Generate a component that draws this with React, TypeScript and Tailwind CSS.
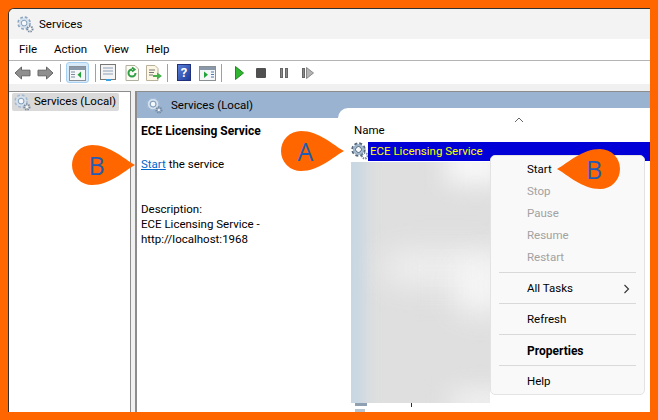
import React from "react";

const font = { fontFamily: 'Roboto, "Noto Sans", sans-serif' };

function Gear({ size = 18, dim = false, dark = false }: { size?: number; dim?: boolean; dark?: boolean }) {
  const a = dim ? "#a3bad3" : dark ? "#56677a" : "#8ba6c2";
  return (
    <svg width={size} height={size} viewBox="0 0 18 18" className="shrink-0">
      <circle cx="7.5" cy="7.5" r="5.6" fill="none" stroke={a} strokeWidth="3.2" strokeDasharray="2.6 1.8" />
      <circle cx="7.5" cy="7.5" r="4.6" fill="none" stroke={dark ? "#9fb6cc" : "#d4e1ee"} strokeWidth="2" />
      <circle cx="7.5" cy="7.5" r="3" fill="#f6f9fc" stroke={dark ? "#3d5873" : "#7c98b5"} strokeWidth="1" />
      <circle cx="13.7" cy="13.7" r="2.8" fill="none" stroke="#76889a" strokeWidth="2" strokeDasharray="1.4 1" />
      <circle cx="13.7" cy="13.7" r="1.1" fill="#ffffff" />
    </svg>
  );
}

function Arrow({ flip }: { flip?: boolean }) {
  return (
    <svg width="17" height="14" viewBox="0 0 17 14" className={flip ? "-scale-x-100" : ""}>
      <path d="M1 7 L7.5 1 V4.2 H16 V9.8 H7.5 V13 Z" fill="#8f8f8f" stroke="#666666" strokeWidth="1" strokeLinejoin="round" />
    </svg>
  );
}

function Sep() {
  return <div className="w-px h-[18px] bg-[#a0a0a0]" />;
}

function PaneIcon({ variant }: { variant: "left" | "right" }) {
  return (
    <svg width="17" height="16" viewBox="0 0 17 16">
      <rect x="0.5" y="1.5" width="16" height="14" fill="#f4f6f8" stroke="#8a8f96" />
      <rect x="1" y="2" width="15" height="3" fill="#8a99aa" />
      {variant === "left" && (
        <>
          <path d="M2 7 h4 M2 9.5 h4 M2 12 h4" stroke="#7b8ca0" />
          <path d="M12 6.5 V13 L8.5 9.8 Z" fill="#22a33a" />
        </>
      )}
      {variant === "right" && (
        <>
          <path d="M12 7 h3 M12 9.5 h3 M12 12 h3" stroke="#4a78b0" />
          <path d="M5 6.5 V13 L9 9.8 Z" fill="#22a33a" />
        </>
      )}
    </svg>
  );
}

function Callout({ letter, dir, className }: { letter: string; dir: "left" | "right"; className: string }) {
  return (
    <div className={`absolute h-10 flex items-center justify-center ${className}`}>
      <svg width="64" height="40" viewBox="0 0 64 40" className={`absolute inset-0 ${dir === "left" ? "-scale-x-100" : ""}`}>
        <path d="M63 20 C52 14 38 0 20 0 A20 20 0 0 0 20 40 C38 40 52 26 63 20 Z" fill="#ff6600" />
      </svg>
      <span className={`relative text-[25px] leading-none text-[#1f5cb4] ${dir === "left" ? "ml-[12px]" : "mr-[15px]"}`} style={{ fontFamily: '"Open Sans", sans-serif' }}>
        {letter}
      </span>
    </div>
  );
}

function MenuItem({ label, disabled, bold, arrow }: { label: string; disabled?: boolean; bold?: boolean; arrow?: boolean }) {
  return (
    <div className={`h-[22px] flex items-center justify-between pl-9 pr-[14px] pt-[1px] ${disabled ? "text-[#a2a2a2]" : "text-black"} ${bold ? "font-bold text-[12px]" : ""}`}>
      <span>{label}</span>
      {arrow && (
        <svg width="7" height="10" viewBox="0 0 7 10">
          <path d="M1.5 1 L5.5 5 L1.5 9" fill="none" stroke="#333" strokeWidth="1.1" />
        </svg>
      )}
    </div>
  );
}

function MenuSep() {
  return (
    <div className="h-[9px] flex items-center px-2">
      <div className="h-px w-full bg-[#d9d9d9]" />
    </div>
  );
}

export default function App() {
  return (
    <div className="relative w-[658px] h-[420px] bg-[#ff6600] p-2 overflow-hidden text-[11.5px] text-black" style={font}>
      <div className="relative w-[642px] h-[404px] bg-[#f0f0f0] rounded-tl-[6px] border-l border-t border-[#303030] flex flex-col overflow-hidden">
        {/* title */}
        <div className="h-[30px] bg-[#f3f3f3] flex items-center pl-[8px] gap-[5px] shrink-0">
          <Gear size={17} />
          <span className="pt-[1px]">Services</span>
        </div>
        {/* menu */}
        <div className="h-[22px] bg-white flex items-center pl-[10px] pt-[1px] gap-[17px] shrink-0 border-b border-[#b4b4b4]">
          <span>File</span>
          <span>Action</span>
          <span>View</span>
          <span>Help</span>
        </div>
        {/* toolbar */}
        <div className="h-[23px] bg-white flex items-center pl-[5px] shrink-0">
          <Arrow />
          <div className="ml-[6px]"><Arrow flip /></div>
          <div className="ml-[6px]"><Sep /></div>
          <div className="ml-[5px] w-[23px] h-[21px] bg-[#d6eafa] border border-[#a8d0f0] rounded-[3px] flex items-center justify-center">
            <PaneIcon variant="left" />
          </div>
          <div className="ml-[6px]"><Sep /></div>
          <div className="ml-[4px]">
            <svg width="16" height="17" viewBox="0 0 16 17">
              <rect x="0.5" y="0.5" width="15" height="15" fill="#f4f4f4" stroke="#777" />
              <path d="M3 4 h10 M3 7 h10 M3 10 h10" stroke="#8aa0b8" />
              <rect x="6" y="15" width="5" height="2" fill="#3aa0e0" />
            </svg>
          </div>
          <div className="ml-[9px]">
            <svg width="14" height="16" viewBox="0 0 14 16">
              <path d="M1 .5 H10 L13.5 4 V15.5 H1 Z" fill="#fbfbf2" stroke="#b0b0a0" />
              <path d="M10.5 8 A3.5 3.5 0 1 1 7 4.5 M7 2.5 L9.5 4.5 L7 6.5" fill="none" stroke="#2f9e44" strokeWidth="2" />
            </svg>
          </div>
          <div className="ml-[7px]">
            <svg width="16" height="16" viewBox="0 0 16 16">
              <path d="M.5 .5 H9 L12 3.5 V15.5 H.5 Z" fill="#fbf7e4" stroke="#b8b09a" />
              <path d="M3 5 h6 M3 7.5 h5 M3 10 h4" stroke="#777" />
              <path d="M7 10 H11 V7.5 L16 11 L11 14.5 V12 H7 Z" fill="#46b04a" />
            </svg>
          </div>
          <div className="ml-[5px]"><Sep /></div>
          <div className="ml-[9px] w-[14px] h-[17px] bg-gradient-to-br from-[#5b7fd8] to-[#1f3d9c] border border-[#20307a] flex items-center justify-center text-white font-bold text-[13px] leading-none">?</div>
          <div className="ml-[8px]"><PaneIcon variant="right" /></div>
          <div className="ml-[5px]"><Sep /></div>
          <div className="ml-[13px]">
            <svg width="9" height="14" viewBox="0 0 9 14"><path d="M0.5 0.5 V13.5 L8.5 7 Z" fill="#2fb52f" stroke="#208a20" /></svg>
          </div>
          <div className="ml-[12px] w-[10px] h-[10px] bg-[#505050] rounded-[1px]" />
          <div className="ml-[14px] flex gap-[2px]">
            <div className="w-[3px] h-[10px] bg-[#8a8a8a] border border-[#666]" />
            <div className="w-[3px] h-[10px] bg-[#8a8a8a] border border-[#666]" />
          </div>
          <div className="ml-[14px] flex items-center gap-[1px]">
            <div className="w-[3px] h-[10px] bg-[#8a8a8a] border border-[#666]" />
            <svg width="8" height="12" viewBox="0 0 8 12"><path d="M.5 .5 V11.5 L7.5 6 Z" fill="#b5b5b5" stroke="#8a8a8a" /></svg>
          </div>
        </div>
        {/* panes */}
        <div className="flex-1 flex pt-[7px] gap-[4px] min-h-0">
          <div className="w-[122px] bg-white border-t border-r border-[#8c8c8c] shrink-0 pl-[3px] pt-[1px]">
            <div className="h-[18px] w-[107px] bg-[#d9d9d9] rounded-[2px] flex items-center gap-[3px] pl-[2px] whitespace-nowrap">
              <Gear size={17} dim />
              <span>Services (Local)</span>
            </div>
          </div>
          <div className="flex-1 bg-white border-t border-l-2 border-[#8c8c8c] flex flex-col min-w-0">
            <div className="h-[26px] bg-[#9ab3d1] flex items-center pl-[9px] pt-[1px] gap-[8px] shrink-0">
              <Gear size={17} dim />
              <span>Services (Local)</span>
            </div>
            <div className="pl-[4px] pt-[6px] leading-[15px] w-[190px]">
              <div className="font-bold text-[12px]">ECE Licensing Service</div>
              <div className="mt-[18px]"><span className="text-[#0066cc] underline">Start</span> the service</div>
              <div className="mt-[30px]">Description:</div>
              <div>ECE Licensing Service -</div>
              <div>http://localhost:1968</div>
            </div>
          </div>
        </div>

        {/* overlay panel with list */}
        <div className="absolute left-[329px] top-[99px] w-[312px] h-[304px] bg-white rounded-tl-[10px] overflow-hidden">
          <div className="absolute left-[16px] top-[14px]">Name</div>
          <svg width="10" height="6" viewBox="0 0 10 6" className="absolute left-[176px] top-[9px]">
            <path d="M1 5 L5 1 L9 5" fill="none" stroke="#666" />
          </svg>
          <div className="absolute left-[13px] top-[34px]"><Gear size={18} dark /></div>
          <div className="absolute left-[30px] top-[34px] w-[282px] h-[19px] bg-[#0000d7] text-[#ffff00] flex items-center pl-[2px] pt-[1px]">ECE Licensing Service</div>
          <div className="absolute left-[13px] top-[54px] w-[139px] h-[241px] bg-[#dfdfdf] overflow-hidden">
            <div className="absolute -left-[10px] -top-[20px] w-[22px] h-[290px] bg-[#c4d6e3] blur-sm" />
            <div className="absolute left-[95px] -top-[14px] w-[60px] h-[36px] bg-[#f8f8f8] blur-md" />
            <div className="absolute left-[35px] top-[92px] w-[120px] h-[28px] bg-[#f3f3f3] blur-lg" />
            <div className="absolute left-[105px] top-[100px] w-[50px] h-[50px] bg-[#f7f7f7] blur-lg" />
            <div className="absolute left-[100px] top-[228px] w-[60px] h-[24px] bg-[#f2f2f2] blur-md" />
          </div>
          <div className="absolute left-[17px] top-[295px] w-[12px] h-[3px] bg-[#8ea0b2]" />
          <div className="absolute left-[17px] top-[301px] w-[10px] h-[3px] bg-[#b6c4d2]" />
          <div className="absolute left-[73px] top-[295px] w-px h-[4px] bg-[#4a2020]" />
        </div>

        {/* context menu */}
        <div className="absolute left-[481px] top-[146px] w-[155px] bg-[#f9f9f9] border border-[#e3e3e3] rounded-[5px] py-[2px]">
          <MenuItem label="Start" />
          <MenuItem label="Stop" disabled />
          <MenuItem label="Pause" disabled />
          <MenuItem label="Resume" disabled />
          <MenuItem label="Restart" disabled />
          <MenuSep />
          <MenuItem label="All Tasks" arrow />
          <MenuSep />
          <MenuItem label="Refresh" />
          <MenuSep />
          <MenuItem label="Properties" bold />
          <MenuSep />
          <MenuItem label="Help" />
        </div>
      </div>

      <Callout letter="B" dir="right" className="left-[72px] top-[145px] w-[64px]" />
      <Callout letter="A" dir="right" className="left-[281px] top-[131px] w-[64px]" />
      <Callout letter="B" dir="left" className="left-[556px] top-[149px] w-[64px]" />
    </div>
  );
}
